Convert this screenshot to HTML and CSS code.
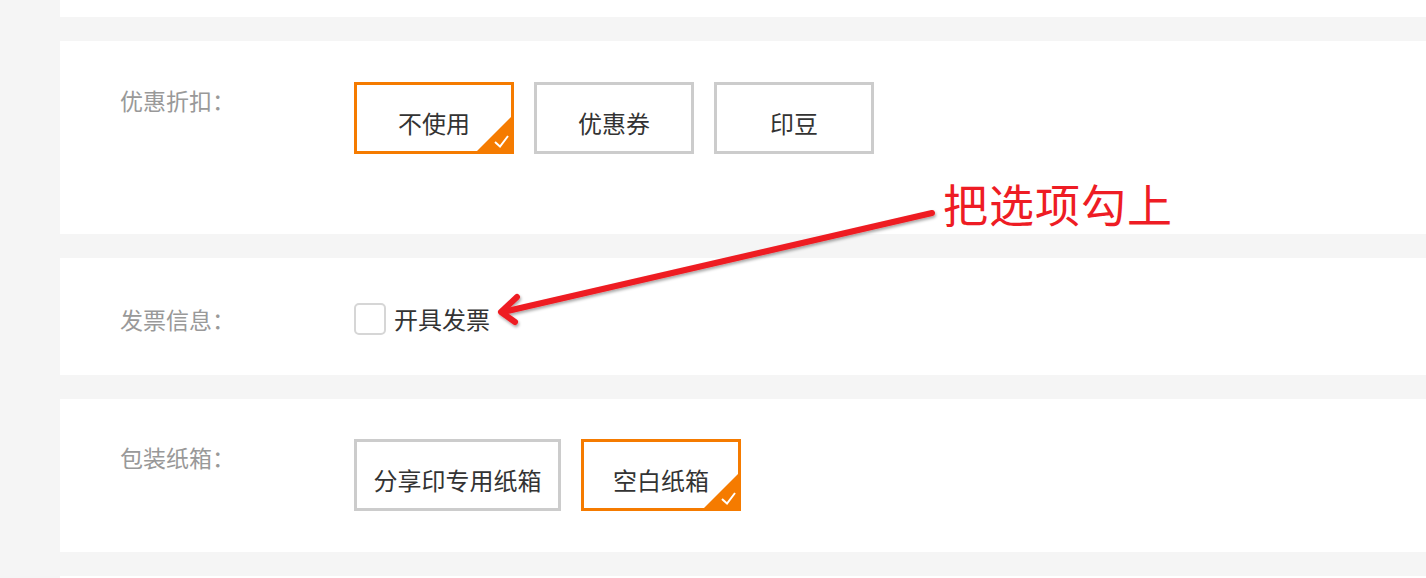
FILE: index.html
```html
<!DOCTYPE html>
<html lang="zh-CN">
<head>
<meta charset="utf-8">
<link rel="stylesheet" href="styles.css">
</head>
<body>
<div class="page">
  <div class="panel panel-top"></div>

  <section class="panel panel-discount">
    <div class="row">
      <div class="label">优惠折扣：</div>
      <div class="options">
        <div class="opt selected">不使用
          <span class="badge"><svg width="40" height="40" viewBox="0 0 40 40"><polygon points="40,0 40,40 0,40" fill="#f57b00"/><polyline points="21,28 26,32.5 34,22" fill="none" stroke="#fff" stroke-width="2"/></svg></span>
        </div>
        <div class="opt">优惠券</div>
        <div class="opt">印豆</div>
      </div>
    </div>
  </section>

  <section class="panel panel-invoice">
    <div class="row row-center">
      <div class="label">发票信息：</div>
      <label class="check"><span class="box"></span><span class="check-text">开具发票</span></label>
    </div>
  </section>

  <section class="panel panel-box">
    <div class="row">
      <div class="label">包装纸箱：</div>
      <div class="options">
        <div class="opt wide">分享印专用纸箱</div>
        <div class="opt selected">空白纸箱
          <span class="badge"><svg width="40" height="40" viewBox="0 0 40 40"><polygon points="40,0 40,40 0,40" fill="#f57b00"/><polyline points="21,28 26,32.5 34,22" fill="none" stroke="#fff" stroke-width="2"/></svg></span>
        </div>
      </div>
    </div>
  </section>

  <div class="panel panel-bottom"></div>
</div>

<div class="note">把选项勾上</div>
<svg class="arrow" width="1426" height="578" viewBox="0 0 1426 578">
  <defs>
    <filter id="sh" x="-10%" y="-50%" width="120%" height="200%">
      <feDropShadow dx="1" dy="2" stdDeviation="1.5" flood-color="#000" flood-opacity="0.35"/>
    </filter>
  </defs>
  <g filter="url(#sh)" stroke="#ee1c24" stroke-linecap="round" stroke-linejoin="round" fill="none">
    <line x1="932" y1="213" x2="503" y2="312" stroke-width="6"/>
    <polyline points="517,297 501,312 515,322" stroke-width="6"/>
  </g>
</svg>
</body>
</html>
```

FILE: styles.css
```css
html, body {
  margin: 0;
  padding: 0;
}
body {
  background: #f5f5f5;
  font-family: "Noto Sans CJK SC", "Noto Sans", sans-serif;
  width: 1426px;
  height: 578px;
  overflow: hidden;
  position: relative;
}
.page {
  display: flex;
  flex-direction: column;
  gap: 24px;
  margin-left: 60px;
}
.panel {
  background: #fff;
  box-sizing: border-box;
}
.panel-top { height: 17px; }
.panel-bottom { height: 20px; }
.panel-discount {
  height: 193px;
  padding: 41px 0 0 60px;
}
.panel-invoice {
  height: 117px;
  padding: 44px 0 0 60px;
}
.panel-box {
  height: 153px;
  padding: 40px 0 0 60px;
}
.row {
  display: flex;
  align-items: flex-start;
}
.row-center { align-items: center; }
.label {
  width: 234px;
  flex: none;
  color: #999;
  font-size: 23px;
  line-height: 30px;
  margin-top: 3px;
}
.row-center .label { margin-top: 0; }
.options {
  display: flex;
  gap: 20px;
}
.opt {
  position: relative;
  box-sizing: border-box;
  width: 160px;
  height: 72px;
  border: 3px solid #cccccc;
  display: flex;
  justify-content: center;
  align-items: center;
  padding-top: 10px;
  font-size: 24px;
  color: #333;
  line-height: 30px;
}
.opt.wide { width: 207px; }
.opt.selected { border-color: #f57b00; }
.badge {
  position: absolute;
  right: -3px;
  bottom: -3px;
  width: 40px;
  height: 40px;
  display: block;
}
.badge svg { display: block; }
.check {
  display: flex;
  align-items: center;
  gap: 8px;
}
.box {
  width: 28px;
  height: 28px;
  border: 2px solid #d6d6d6;
  border-radius: 5px;
  box-sizing: content-box;
  margin-top: 1px;
}
.check-text {
  font-size: 24px;
  color: #333;
  line-height: 30px;
}
.note {
  position: absolute;
  left: 943px;
  top: 174px;
  font-size: 45px;
  line-height: 60px;
  color: #ee1c24;
  letter-spacing: 1px;
}
.arrow {
  position: absolute;
  left: 0;
  top: 0;
  pointer-events: none;
}
```
